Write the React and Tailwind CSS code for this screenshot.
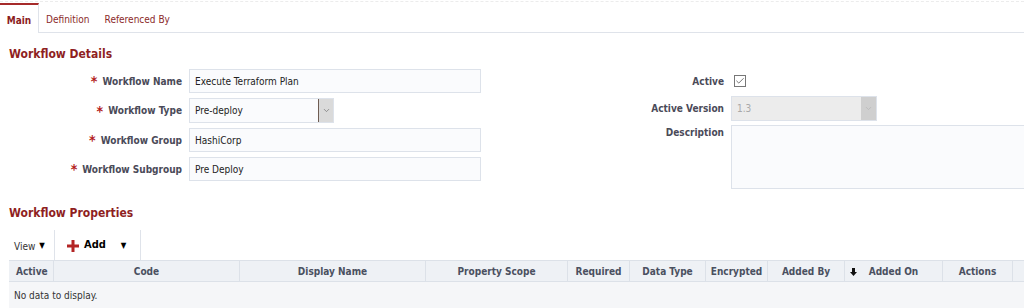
import { ChevronDown, Check } from "lucide-react";

const FONT = { fontFamily: '"DejaVu Sans Condensed", "Liberation Sans", sans-serif' };

const COLUMNS = [
  { label: "Active", w: "w-[45px]", align: "justify-start pl-[7px]" },
  { label: "Code", w: "w-[186px]" },
  { label: "Display Name", w: "w-[186px]" },
  { label: "Property Scope", w: "w-[142px]" },
  { label: "Required", w: "w-[62px]" },
  { label: "Data Type", w: "w-[76px]" },
  { label: "Encrypted", w: "w-[62px]" },
  { label: "Added By", w: "w-[77px]" },
  { label: "Added On", w: "w-[98px]", sort: true },
  { label: "Actions", w: "w-[70px]" },
];

function Label({ children, required }) {
  return (
    <div className="flex items-center justify-end gap-[5px] whitespace-nowrap text-[10px] font-bold text-[#4a4a58]">
      {required && <span className="text-[14px] font-bold leading-none text-[#b31b1b]">*</span>}
      <span>{children}</span>
    </div>
  );
}

function TextInput({ value, className = "w-[292px]" }) {
  return (
    <div
      className={`flex h-[24px] items-center border border-[#dde2ea] bg-[#fafbfd] px-[5px] text-[10px] text-[#222] ${className}`}
    >
      {value}
    </div>
  );
}

function SelectBox({ value, disabled, className }) {
  return (
    <div
      className={`flex h-[25px] items-stretch border border-[#dde2ea] ${
        disabled ? "bg-[#ececec]" : "bg-[#fafbfd]"
      } ${className}`}
    >
      <div
        className={`flex flex-1 items-center px-[5px] text-[10px] ${
          disabled ? "text-[#a9a9a9]" : "text-[#222]"
        }`}
      >
        {value}
      </div>
      <div
        className={`flex w-[15px] items-center justify-center ${
          disabled ? "bg-[#cfcfcf]" : "border-l border-[#6e5c52] bg-[#dadada]"
        }`}
      >
        <ChevronDown size={9} className={disabled ? "text-[#b5b5b5]" : "text-[#777]"} />
      </div>
    </div>
  );
}

export default function App() {
  return (
    <div className="h-[308px] w-[1024px] overflow-hidden bg-white" style={FONT}>
      {/* Tabs */}
      <div className="mt-[1px] border-t border-dashed border-[#ececec]">
        <div className="mt-[1px] flex h-[30px] items-stretch border-b border-[#dfe3ea]">
          <div className="-mb-px flex w-[39px] items-center justify-center border-t-2 border-r border-t-[#a52a2a] border-r-[#dfe3ea] bg-white pt-[3px] text-[10px] font-bold text-[#8b1d1d]">
            Main
          </div>
          <div className="flex items-center pl-[7px] pt-[3px] text-[10px] text-[#8b2a2a]">Definition</div>
          <div className="flex items-center pl-[15px] pt-[3px] text-[10px] text-[#8b2a2a]">Referenced By</div>
        </div>
      </div>

      {/* Workflow Details */}
      <h2 className="mt-[14px] pl-[9px] text-[12px] font-bold leading-[15px] text-[#8f1f1f]">
        Workflow Details
      </h2>

      <div className="mt-[7px] flex items-start">
        <div className="grid grid-cols-[182px_auto] content-start gap-x-[7px] gap-y-[5px]">
          <Label required>Workflow Name</Label>
          <TextInput value="Execute Terraform Plan" />
          <Label required>Workflow Type</Label>
          <SelectBox value="Pre-deploy" className="w-[145px]" />
          <Label required>Workflow Group</Label>
          <TextInput value="HashiCorp" />
          <Label required>Workflow Subgroup</Label>
          <TextInput value="Pre Deploy" />
        </div>

        <div className="ml-[123px] grid grid-cols-[120px_auto] content-start gap-x-[7px]">
          <div className="flex h-[24px] items-center justify-end text-[10px] font-bold text-[#4a4a58]">Active</div>
          <div className="flex h-[24px] items-center pl-[3px]">
            <div className="flex h-[12px] w-[12px] items-center justify-center border border-[#777] bg-white">
              <Check size={10} strokeWidth={1.8} className="text-[#444]" />
            </div>
          </div>
          <div className="mt-[3px] flex h-[24px] items-center justify-end whitespace-nowrap text-[10px] font-bold text-[#4a4a58]">
            Active Version
          </div>
          <SelectBox value="1.3" disabled className="mt-[3px] w-[146px]" />
          <div className="mt-[5px] whitespace-nowrap text-right text-[10px] font-bold leading-[14px] text-[#4a4a58]">
            Description
          </div>
          <div className="mt-[4px] h-[64px] w-[300px] border border-[#dde2ea] bg-[#fafbfd]" />
        </div>
      </div>

      {/* Workflow Properties */}
      <h2 className="mt-[17px] pl-[9px] text-[12px] font-bold leading-[15px] text-[#8f1f1f]">
        Workflow Properties
      </h2>

      <div className="mt-[9px] pl-[9px]">
        {/* Toolbar */}
        <div className="flex h-[30px] items-stretch">
          <div className="flex w-[46px] items-center gap-[4px] border-r border-[#dfe3ea] pl-[5px] pt-[2px] text-[10px] text-[#333]">
            View <span className="text-[8px] text-black">▼</span>
          </div>
          <div className="flex w-[86px] items-center border-r border-[#dfe3ea] pl-[12px] pt-[1px]">
            <svg width="12" height="12" viewBox="0 0 12 12">
              <path d="M4.5 0h3v4.5H12v3H7.5V12h-3V7.5H0v-3h4.5z" fill="#b32525" />
            </svg>
            <span className="ml-[5px] text-[11px] font-bold text-black">Add</span>
            <span className="ml-[15px] text-[8px] text-black">▼</span>
          </div>
        </div>

        {/* Table */}
        <div className="flex h-[22px] border-y border-[#dce1e8] bg-[#eef1f5]">
          {COLUMNS.map((c) => (
            <div
              key={c.label}
              className={`relative flex items-center border-r border-[#dce1e8] text-[10px] font-bold text-[#4a5060] ${c.w} ${
                c.align || "justify-center"
              }`}
            >
              {c.sort && (
                <svg className="absolute left-[5px] top-[7px]" width="7" height="8" viewBox="0 0 7 8">
                  <path d="M2 0h3v4h2L3.5 8 0 4h2z" fill="#111" />
                </svg>
              )}
              {c.label}
            </div>
          ))}
        </div>
        <div className="h-[30px] bg-[#f5f6f8] pl-[5px] pt-[6px] text-[10px] text-[#333]">No data to display.</div>
      </div>
    </div>
  );
}
